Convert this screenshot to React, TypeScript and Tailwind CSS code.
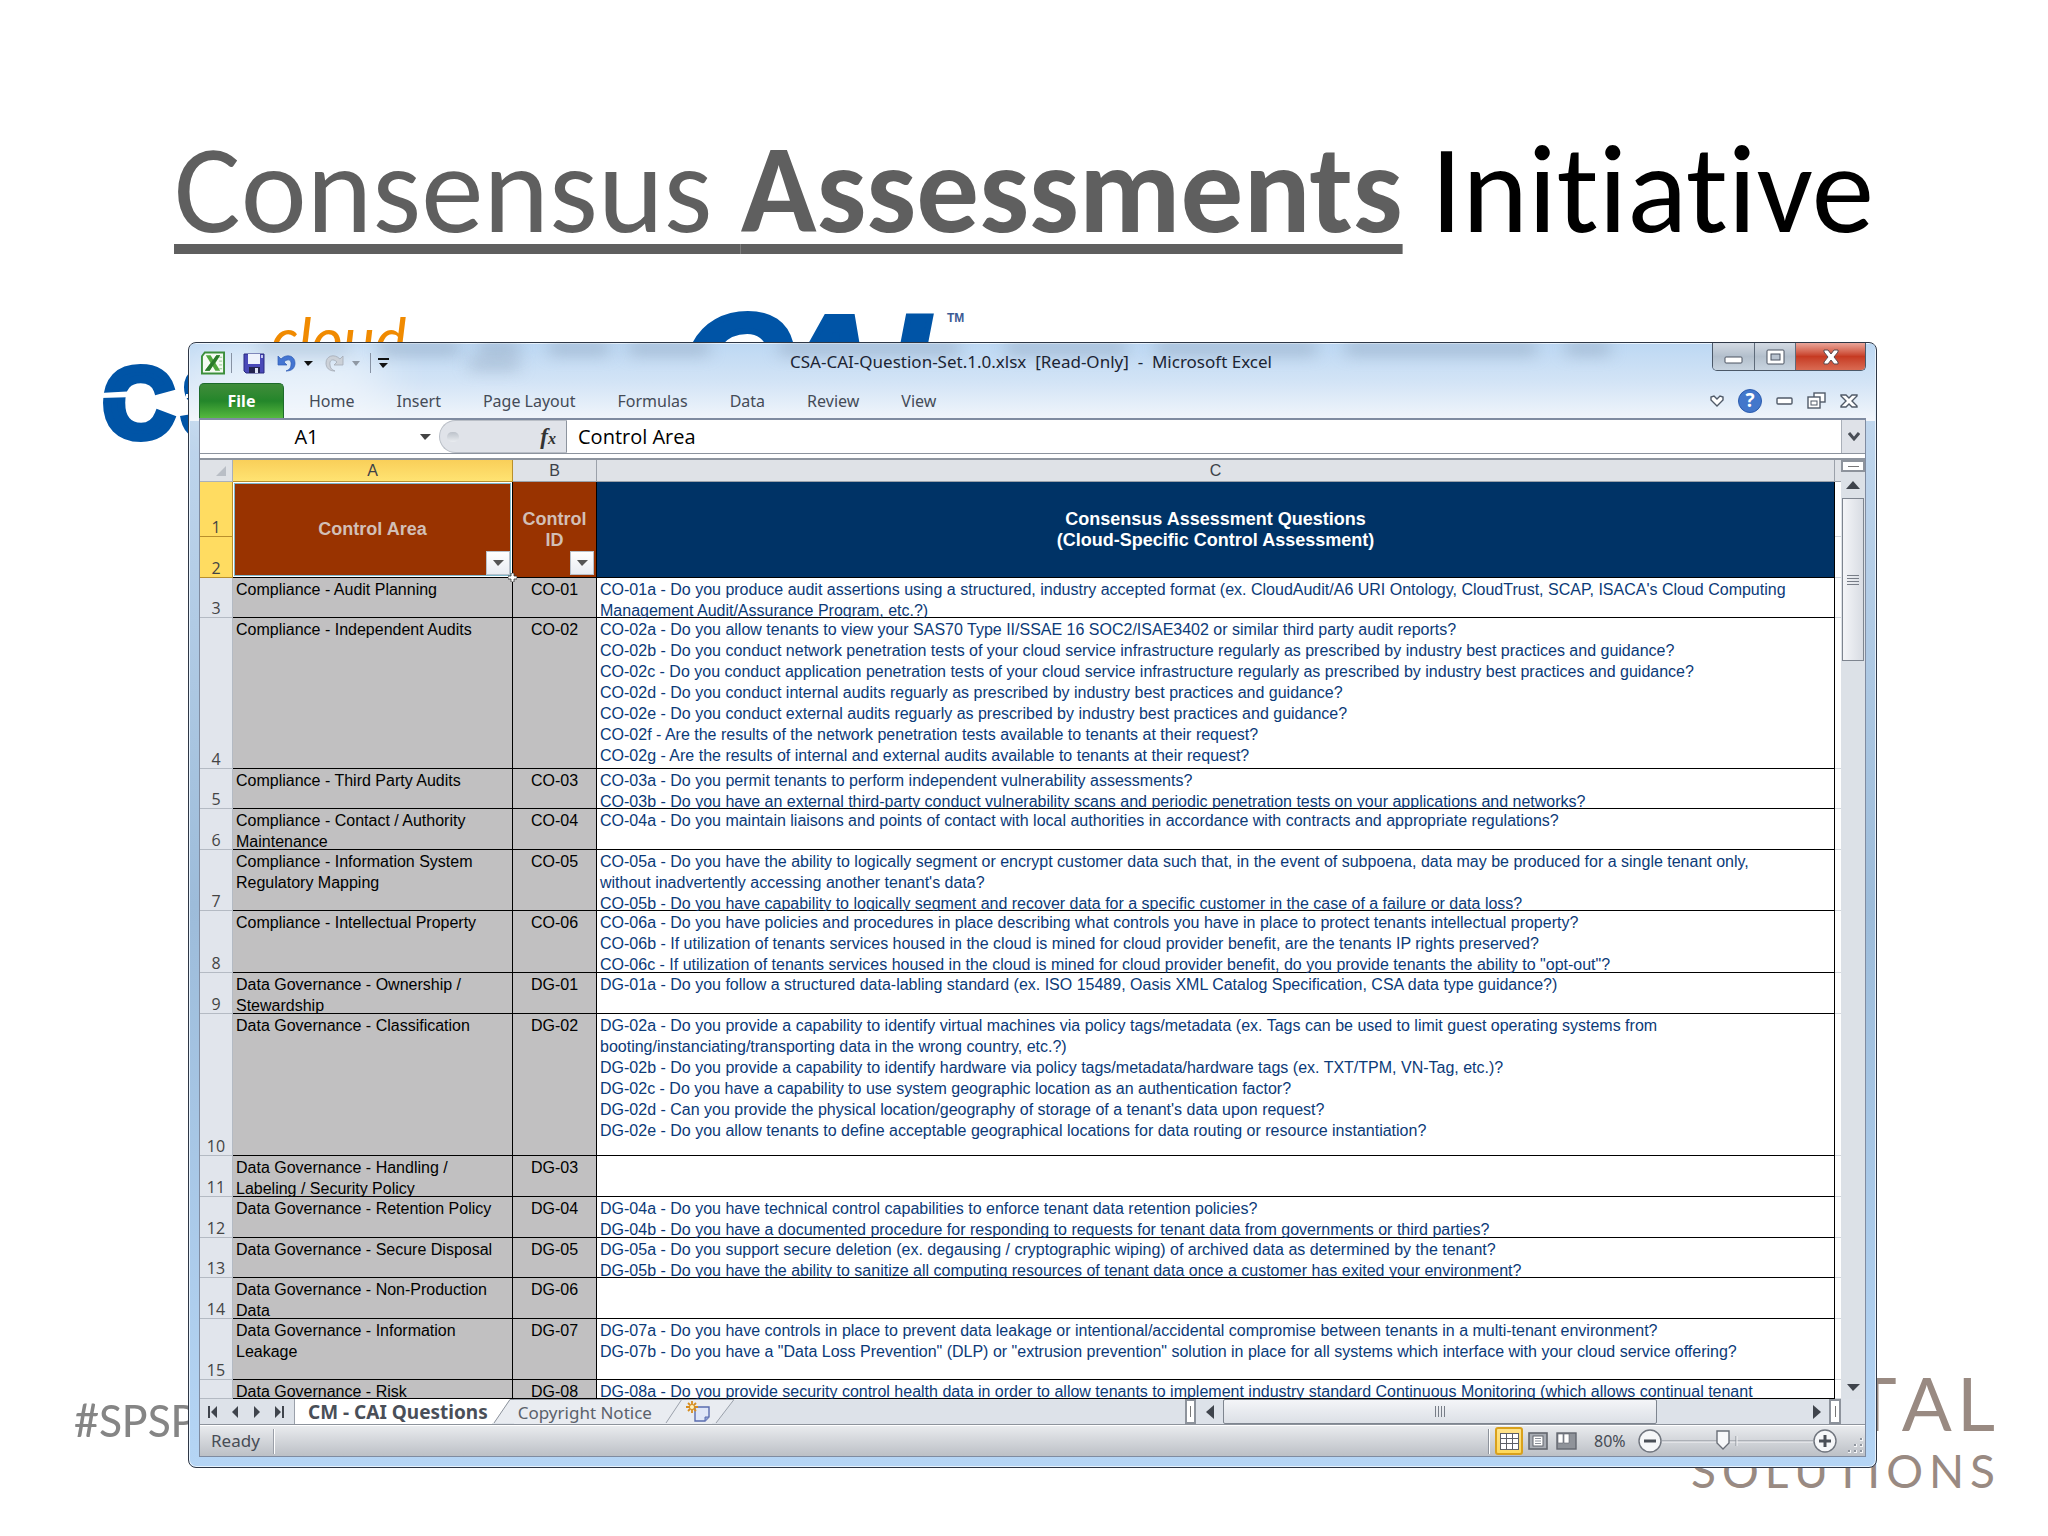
import { Fragment } from 'react'
import type { ReactNode } from 'react'

type Row = { n: number; h: string; area: string[]; id: string; q: string[] }

const ROWS: Row[] = [
  { n: 3, h: 'h-[40px]', area: ['Compliance - Audit Planning'], id: 'CO-01', q: [
    "CO-01a - Do you produce audit assertions using a structured, industry accepted format (ex. CloudAudit/A6 URI Ontology, CloudTrust, SCAP, ISACA's Cloud Computing",
    'Management Audit/Assurance Program, etc.?)',
  ] },
  { n: 4, h: 'h-[151px]', area: ['Compliance - Independent Audits'], id: 'CO-02', q: [
    'CO-02a - Do you allow tenants to view your SAS70 Type II/SSAE 16 SOC2/ISAE3402 or similar third party audit reports?',
    'CO-02b - Do you conduct network penetration tests of your cloud service infrastructure regularly as prescribed by industry best practices and guidance?',
    'CO-02c - Do you conduct application penetration tests of your cloud service infrastructure regularly as prescribed by industry best practices and guidance?',
    'CO-02d - Do you conduct internal audits reguarly as prescribed by industry best practices and guidance?',
    'CO-02e - Do you conduct external audits reguarly as prescribed by industry best practices and guidance?',
    'CO-02f - Are the results of the network penetration tests available to tenants at their request?',
    'CO-02g - Are the results of internal and external audits available to tenants at their request?',
  ] },
  { n: 5, h: 'h-[40px]', area: ['Compliance - Third Party Audits'], id: 'CO-03', q: [
    'CO-03a - Do you permit tenants to perform independent vulnerability assessments?',
    'CO-03b - Do you have an external third-party conduct vulnerability scans and periodic penetration tests on your applications and networks?',
  ] },
  { n: 6, h: 'h-[41px]', area: ['Compliance - Contact / Authority', 'Maintenance'], id: 'CO-04', q: [
    'CO-04a - Do you maintain liaisons and points of contact with local authorities in accordance with contracts and appropriate regulations?',
  ] },
  { n: 7, h: 'h-[61px]', area: ['Compliance - Information System', 'Regulatory Mapping'], id: 'CO-05', q: [
    'CO-05a - Do you have the ability to logically segment or encrypt customer data such that, in the event of subpoena, data may be produced for a single tenant only,',
    "without inadvertently accessing another tenant's data?",
    'CO-05b - Do you have capability to logically segment and recover data for a specific customer in the case of a failure or data loss?',
  ] },
  { n: 8, h: 'h-[62px]', area: ['Compliance - Intellectual Property'], id: 'CO-06', q: [
    'CO-06a - Do you have policies and procedures in place describing what controls you have in place to protect tenants intellectual property?',
    'CO-06b - If utilization of tenants services housed in the cloud is mined for cloud provider benefit, are the tenants IP rights preserved?',
    'CO-06c - If utilization of tenants services housed in the cloud is mined for cloud provider benefit, do you provide tenants the ability to "opt-out"?',
  ] },
  { n: 9, h: 'h-[41px]', area: ['Data Governance - Ownership /', 'Stewardship'], id: 'DG-01', q: [
    'DG-01a - Do you follow a structured data-labling standard (ex. ISO 15489, Oasis XML Catalog Specification, CSA data type guidance?)',
  ] },
  { n: 10, h: 'h-[142px]', area: ['Data Governance - Classification'], id: 'DG-02', q: [
    'DG-02a - Do you provide a capability to identify virtual machines via policy tags/metadata (ex. Tags can be used to limit guest operating systems from',
    'booting/instanciating/transporting data in the wrong country, etc.?)',
    'DG-02b - Do you provide a capability to identify hardware via policy tags/metadata/hardware tags (ex. TXT/TPM, VN-Tag, etc.)?',
    'DG-02c - Do you have a capability to use system geographic location as an authentication factor?',
    "DG-02d - Can you provide the physical location/geography of storage of a tenant's data upon request?",
    'DG-02e - Do you allow tenants to define acceptable geographical locations for data routing or resource instantiation?',
  ] },
  { n: 11, h: 'h-[41px]', area: ['Data Governance - Handling /', 'Labeling / Security Policy'], id: 'DG-03', q: [] },
  { n: 12, h: 'h-[41px]', area: ['Data Governance - Retention Policy'], id: 'DG-04', q: [
    'DG-04a - Do you have technical control capabilities to enforce tenant data retention policies?',
    'DG-04b - Do you have a documented procedure for responding to requests for tenant data from governments or third parties?',
  ] },
  { n: 13, h: 'h-[40px]', area: ['Data Governance - Secure Disposal'], id: 'DG-05', q: [
    'DG-05a - Do you support secure deletion (ex. degausing / cryptographic wiping) of archived data as determined by the tenant?',
    'DG-05b - Do you have the ability to sanitize all computing resources of tenant data once a customer has exited your environment?',
  ] },
  { n: 14, h: 'h-[41px]', area: ['Data Governance - Non-Production', 'Data'], id: 'DG-06', q: [] },
  { n: 15, h: 'h-[61px]', area: ['Data Governance - Information', 'Leakage'], id: 'DG-07', q: [
    'DG-07a - Do you have controls in place to prevent data leakage or intentional/accidental compromise between tenants in a multi-tenant environment?',
    'DG-07b - Do you have a "Data Loss Prevention" (DLP) or "extrusion prevention" solution in place for all systems which interface with your cloud service offering?',
  ] },
  { n: 16, h: 'h-[19px]', area: ['Data Governance - Risk'], id: 'DG-08', q: [
    'DG-08a - Do you provide security control health data in order to allow tenants to implement industry standard Continuous Monitoring (which allows continual tenant',
  ] },
]

const TABS = ['Home', 'Insert', 'Page Layout', 'Formulas', 'Data', 'Review', 'View']

function Lines({ items }: { items: string[] }) {
  return (
    <>
      {items.map((t, i) => (
        <Fragment key={i}>
          {i > 0 && <br />}
          {t}
        </Fragment>
      ))}
    </>
  )
}

function IconButton({ label, className, children }: { label: string; className?: string; children: ReactNode }) {
  return (
    <button aria-label={label} className={`flex shrink-0 items-center justify-center ${className ?? ''}`}>
      {children}
    </button>
  )
}

function Arrow({ d, w, h, fill = '#3f444c' }: { d: string; w: number; h: number; fill?: string }) {
  return <svg width={w} height={h} viewBox={`0 0 ${w} ${h}`}><path d={d} fill={fill} /></svg>
}

/* ── Logos behind the window ─────────────────────────────────── */
function Logos() {
  return (
    <>
      <svg className="absolute left-[90px] top-[300px]" width="900" height="160" viewBox="0 0 900 160">
        <g fontFamily="Liberation Sans" fontWeight="700" fill="#0054a6" stroke="#0054a6">
          <text x="13" y="137" fontSize="98" strokeWidth="8">C</text>
          <text x="92" y="137" fontSize="98" strokeWidth="8">S</text>
          <g fontSize="150" strokeWidth="6" fontStyle="italic">
            <text x="590" y="120">C</text>
            <text x="682" y="120">A</text>
            <text x="796" y="120">I</text>
          </g>
        </g>
        <path d="M10 93 L46 91 V97 L10 98 Z M96 94 H140 V98 H96 Z" fill="#fff" />
        <text x="181" y="61" fontFamily="Lato" fontSize="60" fontStyle="italic" fill="#f08a00">cloud</text>
        <text x="857" y="22" fontFamily="Liberation Sans" fontSize="12" fontWeight="700" fill="#3c5a94">TM</text>
      </svg>
      <p className="absolute bottom-[86px] left-[74px] font-[Carlito,Lato,sans-serif] text-[50px] leading-[60px] text-[#858585]">#SPSP</p>
      <div className="absolute bottom-[40px] right-[53px] w-[304px] font-[Lato,sans-serif] text-[#998a82]">
        <div className="mb-[5px] ml-auto flex w-[142px] justify-between text-[74px] leading-[76px]">
          {['T', 'A', 'L'].map((c) => <span key={c}>{c}</span>)}
        </div>
        <div className="flex justify-between text-[46px] leading-[50px]">
          {'SOLUTIONS'.split('').map((c, i) => <span key={i}>{c}</span>)}
        </div>
      </div>
    </>
  )
}

/* ── Title bar ───────────────────────────────────────────────── */
function TitleBar() {
  return (
    <header className="relative flex h-[40px] items-start">
      <div className="flex h-[40px] items-center pl-[2px]">
        <svg width="24" height="24" viewBox="0 0 25 24">
          <path d="M4 1 H24 V23 H1 V5 Z" fill="#f4faf2" stroke="#3c8f3c" strokeWidth="2" />
          <path d="M5 4 H10 L13 9 L16 4 H20 L15 12 L20 20 H15 L12 15 L9 20 H4 L10 12 Z" fill="#4fa63c" />
          <path d="M16 4 H20 L9 20 H4 Z" fill="#2a7a2a" />
          <path d="M19 6 H22 M19 10 H22 M19 14 H22 M19 18 H22" stroke="#8cc48a" strokeWidth="1" />
        </svg>
        <span className="ml-[6px] h-[20px] w-px bg-[#8792a3]" />
        <IconButton label="Save" className="ml-[11px]">
          <svg width="22" height="21" viewBox="0 0 22 21">
            <path d="M1 1 H21 V20 H3 L1 18 Z" fill="#4a49b8" stroke="#2b2b80" />
            <rect x="5" y="1" width="12" height="10" fill="#eef2fc" />
            <rect x="18" y="2" width="2" height="3" fill="#c3c8f0" />
            <rect x="6" y="14" width="11" height="6" fill="#23234f" />
            <rect x="12" y="15" width="3" height="5" fill="#dfe4f6" />
          </svg>
        </IconButton>
        <IconButton label="Undo" className="ml-[12px]">
          <svg width="20" height="20" viewBox="0 0 20 20">
            <path d="M1 3 V12 H10 L7 9 C11 5 15 7 14 12 C14 15 12 17 9 18 C15 18 18 15 18 10 C18 3 10 0 4 6 Z" fill="#4475d2" stroke="#2e5bb5" strokeWidth=".7" />
          </svg>
        </IconButton>
        <IconButton label="Undo history" className="ml-[7px]"><Arrow d="M0 0 H9 L4 5 Z" w={9} h={5} fill="#111" /></IconButton>
        <IconButton label="Redo" className="ml-[12px]">
          <svg width="20" height="20" viewBox="0 0 20 20">
            <path d="M18 3 V12 H9 L12 9 C8 5 4 7 5 12 C5 15 7 17 10 18 C4 18 1 15 1 10 C1 3 9 0 15 6 Z" fill="#ccd1d8" stroke="#a4abb5" strokeWidth=".8" />
          </svg>
        </IconButton>
        <IconButton label="Redo history" className="ml-[7px]"><Arrow d="M0 0 H8 L4 5 Z" w={8} h={5} fill="#8f98a3" /></IconButton>
        <span className="ml-[10px] h-[20px] w-px bg-[#8792a3]" />
        <IconButton label="Customize toolbar" className="ml-[7px]"><Arrow d="M0 0 H11 V2 H0 Z M1 5 H10 L5 10 Z" w={11} h={10} fill="#111" /></IconButton>
      </div>
      <p className="absolute inset-x-0 top-[7px] pr-[3px] text-center font-['Noto_Sans',sans-serif] text-[17px] leading-[24px] whitespace-pre text-[#1c2433]">
        CSA-CAI-Question-Set.1.0.xlsx  [Read-Only]  -  Microsoft Excel
      </p>
      <div className="ml-auto flex h-[28px] overflow-hidden rounded-b-[5px] border border-t-0 border-[#4b5868]">
        <IconButton label="Minimize" className="w-[42px] border-r border-[#5f6b7a] bg-linear-to-b from-[#d3dae3] via-[#b3bfcc] to-[#c8d4e0] pt-[6px]">
          <svg width="20" height="8" viewBox="0 0 20 8"><rect x="1" y="1" width="17" height="6" rx="1" fill="#fff" stroke="#4a5361" /></svg>
        </IconButton>
        <IconButton label="Restore window" className="w-[41px] border-r border-[#5f6b7a] bg-linear-to-b from-[#d3dae3] via-[#b3bfcc] to-[#c8d4e0]">
          <svg width="19" height="16" viewBox="0 0 19 16">
            <rect x="1" y="1" width="17" height="14" rx="1" fill="#fff" stroke="#4a5361" />
            <rect x="5" y="5" width="9" height="6" fill="#b9c3cf" stroke="#4a5361" />
          </svg>
        </IconButton>
        <IconButton label="Close" className="w-[69px] bg-linear-to-b from-[#e9a59a] via-[#c63a22] to-[#d96a52]">
          <svg width="18" height="16" viewBox="0 0 18 16">
            <path d="M2 1 H6 L9 5 L12 1 H16 V3 L12 8 L16 13 V15 H12 L9 11 L6 15 H2 V13 L6 8 L2 3 Z" fill="#fff" stroke="#5b4a4e" />
          </svg>
        </IconButton>
      </div>
    </header>
  )
}

function RibbonTabs() {
  return (
    <nav className="relative flex h-[35px] items-stretch font-['Noto_Sans',sans-serif] text-[16px] text-[#444b57]">
      <button className="mr-[4px] w-[85px] rounded-t-[5px] border border-b-0 border-[#1d6b2b] bg-linear-to-b from-[#3f8c3a] via-[#23862a] to-[#55b93e] font-bold text-white">File</button>
      {TABS.map((t) => <button key={t} className="px-[21px] pt-px">{t}</button>)}
      <div className="ml-auto flex items-center gap-[14px] pr-[8px]">
        <IconButton label="Expand ribbon">
          <svg width="14" height="12" viewBox="0 0 14 12"><path d="M7 11 L1 5 V2 L4 1 L7 4 L10 1 L13 2 V5 Z" fill="#fff" stroke="#505a68" strokeWidth="1.4" /></svg>
        </IconButton>
        <IconButton label="Help" className="size-[24px] rounded-full border border-[#2c5cae] bg-[#4377cb] text-[19px] leading-none font-bold text-white">?</IconButton>
        <IconButton label="Minimize workbook">
          <svg width="17" height="8" viewBox="0 0 17 8"><rect x="1" y="1" width="15" height="6" rx="1" fill="#fff" stroke="#505a68" strokeWidth="1.4" /></svg>
        </IconButton>
        <IconButton label="Restore workbook">
          <svg width="19" height="17" viewBox="0 0 19 17">
            <rect x="7" y="1" width="11" height="9" fill="#fff" stroke="#505a68" strokeWidth="1.4" />
            <rect x="1" y="5" width="12" height="11" fill="#fff" stroke="#505a68" strokeWidth="1.4" />
            <rect x="4" y="9" width="6" height="4" fill="#fff" stroke="#505a68" />
          </svg>
        </IconButton>
        <IconButton label="Close workbook">
          <svg width="18" height="14" viewBox="0 0 18 14">
            <path d="M1 1 H6 L9 4 L12 1 H17 V2 L12 7 L17 12 V13 H12 L9 10 L6 13 H1 V12 L6 7 L1 2 Z" fill="#fff" stroke="#505a68" strokeWidth="1.4" />
          </svg>
        </IconButton>
      </div>
    </nav>
  )
}

function FormulaBar() {
  return (
    <div className="flex h-[34px] border-b border-[#8d949e] bg-white font-['Open_Sans',sans-serif] text-[20px] text-black">
      <input aria-label="Name box" defaultValue="A1" className="w-[213px] bg-transparent text-center outline-none" />
      <IconButton label="Name list" className="w-[24px]"><Arrow d="M0 0 H11 L5 6 Z" w={11} h={6} fill="#444" /></IconButton>
      <div className="ml-[2px] flex w-[128px] items-center justify-between rounded-l-full border border-r-[#8d949e] border-[#b9bec6] bg-[#e0e3e9] pr-[10px] pl-[7px]">
        <span className="h-[10px] w-[12px] rounded-full bg-linear-to-b from-[#bcc2ca] to-[#e9ecf0]" />
        <button aria-label="Insert function" className="font-['Liberation_Serif',serif] text-[23px] leading-none font-bold text-[#333] italic">f<span className="text-[16px]">x</span></button>
      </div>
      <input aria-label="Formula" defaultValue="Control Area" className="min-w-0 flex-1 bg-transparent pl-[11px] outline-none" />
      <IconButton label="Expand formula bar" className="w-[24px] border-l border-[#a9afb8] bg-[#dfe2e8]">
        <svg width="12" height="10" viewBox="0 0 12 10"><path d="M1 1 L6 7 L11 1" fill="none" stroke="#4a4f57" strokeWidth="3" /></svg>
      </IconButton>
    </div>
  )
}

/* ── Sheet ───────────────────────────────────────────────────── */
function FilterButton({ label }: { label: string }) {
  return (
    <IconButton label={label} className="absolute right-[2px] bottom-[2px] size-[24px] border border-[#b8c0ca] bg-linear-to-b from-white to-[#e9ecf2]">
      <Arrow d="M0 0 H11 L5 6 Z" w={11} h={6} fill="#555" />
    </IconButton>
  )
}

function Sheet() {
  return (
    <table className="min-w-0 flex-1 table-fixed border-separate border-spacing-0 bg-white font-['Liberation_Sans',Arial,sans-serif] text-[16px] leading-[21px]">
      <colgroup>
        <col className="w-[33px]" />
        <col className="w-[280px]" />
        <col className="w-[84px]" />
        <col />
        <col className="w-[6px]" />
      </colgroup>
      <thead>
        <tr className="h-[22px] bg-[#dfe2e7] text-[#3c4148]">
          <td className="border-r border-b border-[#a9b0ba] p-0">
            <svg className="mr-[6px] ml-auto" width="10" height="10" viewBox="0 0 10 10"><path d="M10 0 V10 H0 Z" fill="#b9bec6" /></svg>
          </td>
          <th className="border-r border-b border-[#b98f2c] bg-linear-to-b from-[#f9cf59] to-[#ffe372] p-0 font-normal">A</th>
          <th className="border-r border-b border-[#9ba1aa] p-0 font-normal">B</th>
          <th className="border-r border-b border-[#9ba1aa] p-0 font-normal">C</th>
          <td className="border-b border-[#9ba1aa] p-0" />
        </tr>
      </thead>
      <tbody>
        <tr className="h-[55px]">
          <th className="border-r border-b border-[#b98f2c] bg-[#ffdc61] p-0 align-bottom font-['Open_Sans',sans-serif] leading-[18px] font-normal text-[#444]">1</th>
          <th rowSpan={2} className="relative border-r border-b border-black bg-[#993300] p-0 text-[18px] font-bold text-[#d2bfb6] shadow-[inset_0_0_0_1px_#ffffff,inset_0_0_0_2px_#7fb9cc]">
            Control Area
            <FilterButton label="Filter control area" />
            <svg className="absolute -right-[5px] -bottom-[5px] z-10" width="9" height="9" viewBox="0 0 9 9">
              <path d="M3 0 H6 V3 H9 V6 H6 V9 H3 V6 H0 V3 H3 Z" fill="#fff" stroke="#333" strokeWidth=".8" />
            </svg>
          </th>
          <th rowSpan={2} className="relative border-r border-b border-black bg-[#993300] p-0 text-[18px] font-bold text-[#d2bfb6]">
            Control<br />ID
            <FilterButton label="Filter control ID" />
          </th>
          <th rowSpan={2} className="border-r border-b border-black bg-[#003366] p-0 text-[18px] font-bold text-white">
            Consensus Assessment Questions<br />(Cloud-Specific Control Assessment)
          </th>
          <td className="border-b border-[#d3d7dc] p-0" />
        </tr>
        <tr className="h-[41px]">
          <th className="border-r border-b border-[#b98f2c] bg-[#ffdc61] p-0 align-bottom font-['Open_Sans',sans-serif] leading-[18px] font-normal text-[#444]">2</th>
          <td className="border-b border-[#d3d7dc] p-0" />
        </tr>
        {ROWS.map((r) => (
          <tr key={r.n} className={`${r.h} align-top`}>
            <th className="border-r border-b border-[#b4bac3] bg-[#e1e5ec] p-0 align-bottom font-['Open_Sans',sans-serif] leading-[18px] font-normal text-[#444]">
              {r.n < 16 && r.n}
            </th>
            <td className="border-r border-b border-black bg-[#c1c0c1] p-0 text-black">
              <div className={`${r.h} -mb-px overflow-hidden pt-px pl-[3px] whitespace-nowrap`}><Lines items={r.area} /></div>
            </td>
            <td className="border-r border-b border-black bg-[#c1c0c1] p-0 text-center text-black">
              <div className={`${r.h} -mb-px overflow-hidden pt-px`}>{r.id}</div>
            </td>
            <td className="border-r border-b border-black p-0 text-[#0b3a78]">
              <div className={`${r.h} -mb-px overflow-hidden pt-px pl-[3px] whitespace-nowrap`}><Lines items={r.q} /></div>
            </td>
            <td className="border-b border-[#d3d7dc] p-0" />
          </tr>
        ))}
      </tbody>
    </table>
  )
}

function VerticalScroll() {
  return (
    <div className="flex w-[24px] shrink-0 flex-col items-center bg-[#dce1e7]">
      <div className="flex h-[12px] w-full items-center justify-center border-2 border-[#8d939c] bg-white"><span className="h-px w-[11px] bg-[#777]" /></div>
      <IconButton label="Scroll up" className="h-[26px] w-full"><Arrow d="M7 0 L14 8 H0 Z" w={14} h={8} /></IconButton>
      <div className="flex h-[163px] w-[22px] flex-col items-center justify-center gap-[2px] border border-[#7e858f] bg-linear-to-r from-[#f4f5f8] to-[#d8dce3]">
        {[0, 1, 2, 3].map((i) => <span key={i} className="h-px w-[12px] bg-[#777d87]" />)}
      </div>
      <IconButton label="Scroll down" className="mt-auto h-[24px] w-full"><Arrow d="M0 0 H13 L6 7 Z" w={13} h={7} /></IconButton>
    </div>
  )
}

function SheetTabs() {
  return (
    <div className="flex h-[26px] items-stretch border-b border-[#8d939c] bg-[#dde2e9] font-['Noto_Sans',sans-serif] text-[17px]">
      <div className="flex w-[94px] shrink-0 items-center justify-between pr-[10px] pl-[8px]">
        <IconButton label="First sheet"><Arrow d="M0 0 H2 V12 H0 Z M9 0 V12 L3 6 Z" w={9} h={12} /></IconButton>
        <IconButton label="Previous sheet"><Arrow d="M6 0 V12 L0 6 Z" w={6} h={12} /></IconButton>
        <IconButton label="Next sheet"><Arrow d="M0 0 V12 L6 6 Z" w={6} h={12} /></IconButton>
        <IconButton label="Last sheet"><Arrow d="M0 0 V12 L6 6 Z M7 0 H9 V12 H7 Z" w={9} h={12} /></IconButton>
      </div>
      <button className="shrink-0 border-l border-[#9aa0aa] bg-white pr-[4px] pl-[13px] text-[19px] leading-[24px] font-bold text-[#4a4f58]">CM - CAI Questions</button>
      <svg className="shrink-0" width="22" height="25" viewBox="0 0 22 25"><path d="M0 0 H18 L2 24 H0 Z" fill="#fff" /><path d="M22 0 H18 L2 24 H22 Z" fill="#e9ecf1" /><path d="M22 .5 H18 L2 24" fill="none" stroke="#8d939c" /></svg>
      <button className="shrink-0 border-t border-[#9aa0aa] bg-[#e9ecf1] px-[4px] leading-[23px] text-[#5b616b]">Copyright Notice</button>
      <svg className="shrink-0" width="30" height="25" viewBox="0 0 30 25"><path d="M0 0 H30 V25 H0 Z" fill="#e9ecf1" /><path d="M0 .5 H30 M26 0 L10 24" fill="none" stroke="#9aa0aa" /></svg>
      <IconButton label="Insert sheet" className="border-t border-[#9aa0aa] bg-[#e9ecf1]">
        <svg width="26" height="22" viewBox="0 0 26 22">
          <path d="M9 6 H23 V16 L19 20 H9 Z" fill="#dfe6f8" stroke="#5a6cae" strokeWidth="1.4" />
          <path d="M23 16 H19 V20" fill="#8fa0d8" stroke="#5a6cae" />
          <path d="M6 0 V12 M0 6 H12 M2 2 L10 10 M10 2 L2 10" stroke="#d78d1f" strokeWidth="1.8" />
          <circle cx="6" cy="6" r="2" fill="#fff3c0" />
        </svg>
      </IconButton>
      <svg className="shrink-0" width="22" height="25" viewBox="0 0 22 25"><path d="M0 0 H22 L4 24 H0 Z" fill="#e9ecf1" /><path d="M0 .5 H22 L4 24" fill="none" stroke="#9aa0aa" /></svg>
      <div className="ml-auto flex w-[680px] shrink-0 items-stretch">
        <div className="flex w-[11px] items-center justify-center border-2 border-[#8d939c] bg-white"><span className="h-[11px] w-px bg-[#777]" /></div>
        <IconButton label="Scroll left" className="w-[27px]"><Arrow d="M8 0 V14 L0 7 Z" w={8} h={14} /></IconButton>
        <div className="flex w-[434px] items-center justify-center gap-[2px] rounded-[2px] border border-[#7e858f] bg-linear-to-b from-[#f4f5f8] to-[#dce0e6]">
          {[0, 1, 2, 3].map((i) => <span key={i} className="h-[11px] w-px bg-[#777d87]" />)}
        </div>
        <IconButton label="Scroll right" className="ml-auto w-[25px]"><Arrow d="M0 0 V14 L8 7 Z" w={8} h={14} /></IconButton>
        <div className="flex w-[12px] items-center justify-center border-2 border-[#8d939c] bg-white"><span className="h-[11px] w-px bg-[#777]" /></div>
        <span className="w-[24px]" />
      </div>
    </div>
  )
}

function StatusBar() {
  return (
    <footer className="flex h-[31px] items-center border-t border-white bg-linear-to-b from-[#e9ebee] to-[#bcc0c6] pl-[11px] font-['Noto_Sans',sans-serif] text-[17px] leading-[26px] text-[#474c55]">
      Ready
      <span className="ml-[13px] h-[25px] w-[2px] border-r border-white bg-[#9a9fa8]" />
      <div className="ml-auto flex items-center">
        <span className="h-[25px] w-[2px] border-r border-white bg-[#8d939c]" />
        <IconButton label="Normal view" className="ml-[5px] h-[28px] w-[28px] rounded-[3px] border-2 border-[#d9a11d] bg-linear-to-b from-[#ffe38a] to-[#ffd95a]">
          <svg width="19" height="17" viewBox="0 0 19 17"><rect width="19" height="17" fill="#5d6066" /><path d="M1 1h5v4h-5z M7 1h5v4h-5z M13 1h5v4h-5z M1 6h5v4h-5z M7 6h5v4h-5z M13 6h5v4h-5z M1 11h5v5h-5z M7 11h5v5h-5z M13 11h5v5h-5z" fill="#fff" /></svg>
        </IconButton>
        <IconButton label="Page layout view" className="ml-[5px]">
          <svg width="20" height="18" viewBox="0 0 20 18"><rect x="1" y="1" width="18" height="16" fill="#a9adb4" stroke="#63676f" strokeWidth="1.6" /><rect x="5" y="4" width="10" height="10" fill="#fff" stroke="#63676f" /><path d="M7 6.500H13 M7 9H13 M7 11.500H13" stroke="#8a8f98" /></svg>
        </IconButton>
        <IconButton label="Page break view" className="ml-[8px]">
          <svg width="21" height="18" viewBox="0 0 21 18"><rect x="1" y="1" width="19" height="16" fill="#8f939a" stroke="#63676f" strokeWidth="1.4" /><path d="M2 2 H7 V11 H2 Z M8 2 H13 V11 H8 Z" fill="#fff" stroke="#63676f" strokeWidth=".6" /></svg>
        </IconButton>
        <span className="ml-[17px] w-[36px] text-[16px]">80%</span>
        <IconButton label="Zoom out" className="ml-[8px]">
          <svg width="24" height="24" viewBox="0 0 24 24"><circle cx="12" cy="12" r="11" fill="#f6f7f9" stroke="#70757e" strokeWidth="1.4" /><path d="M6 12 H18" stroke="#4a4f57" strokeWidth="3" /></svg>
        </IconButton>
        <div className="relative h-[24px] w-[151px]">
          <svg width="151" height="24" viewBox="0 0 151 24">
            <path d="M0 12 H151" stroke="#878c95" /><path d="M0 13 H151" stroke="#f3f4f6" />
            <path d="M74 7 V17" stroke="#878c95" /><path d="M75 7 V17" stroke="#f3f4f6" />
            <path d="M55 2 H67 V14 L61 20 L55 14 Z" fill="#f7f8fa" stroke="#6a6f78" strokeWidth="1.4" />
          </svg>
          <input type="range" aria-label="Zoom" min="10" max="400" defaultValue="80" className="absolute inset-0 w-full opacity-0" />
        </div>
        <IconButton label="Zoom in">
          <svg width="24" height="24" viewBox="0 0 24 24"><circle cx="12" cy="12" r="11" fill="#f6f7f9" stroke="#70757e" strokeWidth="1.4" /><path d="M6 12 H18 M12 6 V18" stroke="#4a4f57" strokeWidth="3" /></svg>
        </IconButton>
        <svg className="ml-[11px] self-end" width="17" height="20" viewBox="0 0 17 20">
          <path d="M12 3h3v3h-3z M6 9h3v3h-3z M12 9h3v3h-3z M0 15h3v3h-3z M6 15h3v3h-3z M12 15h3v3h-3z" fill="#f4f5f7" />
          <path d="M12 3h2v2h-2z M6 9h2v2h-2z M12 9h2v2h-2z M0 15h2v2h-2z M6 15h2v2h-2z M12 15h2v2h-2z" fill="#8f959e" />
        </svg>
      </div>
    </footer>
  )
}

export default function App() {
  return (
    <main className="relative min-h-screen overflow-hidden bg-white pb-[68px]">
      <h1 className="pt-[115px] pb-[77px] text-center font-[Carlito,Lato,sans-serif] text-[125px] leading-[150px] text-black [font-variant-ligatures:none]">
        <span className="text-[#5f5f5f] underline decoration-[10px] underline-offset-[12px] [text-decoration-skip-ink:none]">Consensus <b>Assessments</b></span> Initiative
      </h1>
      <Logos />
      <section className="relative mr-[171px] ml-[188px] overflow-hidden rounded-[8px] border border-[#2e3746] bg-linear-to-b from-[#c5daf0] via-[#9dbcda] to-[#b5d5f5] px-[10px] pb-[10px] shadow-[inset_0_0_0_1px_#e8f3fd]">
        <div className="absolute inset-x-px top-px h-[77px] bg-linear-to-b from-[#bdd8f3] via-[#d3e4f6] to-[#f2f6fb]" />
        {/* glass reflections */}
        <div className="absolute top-0 left-0 h-[76px] w-[200px] rounded-full bg-white/50 blur-xl" />
        <div className="absolute top-px left-[70px] h-[9px] w-[90px] bg-[#8fa3ba]/50 blur-sm" />
        <div className="absolute top-px left-[190px] h-[9px] w-[80px] bg-[#8fa3ba]/80 blur-sm" />
        <div className="absolute top-[16px] left-[280px] h-[10px] w-[50px] bg-[#8fa3ba]/60 blur-sm" />
        <div className="absolute top-px left-[290px] h-[9px] w-[40px] bg-[#8fa3ba]/80 blur-sm" />
        <div className="absolute top-px left-[360px] h-[9px] w-[60px] bg-[#8fa3ba]/80 blur-sm" />
        <div className="absolute top-px left-[440px] h-[9px] w-[80px] bg-[#8fa3ba]/80 blur-sm" />
        <div className="absolute top-px left-[590px] h-[9px] w-[180px] bg-[#8fa3ba]/80 blur-sm" />
        <div className="absolute top-px right-[750px] h-[9px] w-[120px] bg-[#8fa3ba]/80 blur-sm" />
        <div className="absolute top-px right-[560px] h-[9px] w-[160px] bg-[#8fa3ba]/80 blur-sm" />
        <div className="absolute top-px right-[340px] h-[9px] w-[190px] bg-[#8fa3ba]/80 blur-sm" />
        <div className="absolute top-px right-[266px] h-[9px] w-[44px] bg-[#8fa3ba]/80 blur-sm" />
        <TitleBar />
        <RibbonTabs />
        <div className="relative border-t-2 border-r border-b border-l border-[#7f8ba0] bg-white">
          <FormulaBar />
          <div className="mt-[4px] flex border-t-2 border-[#8d949e]">
            <Sheet />
            <VerticalScroll />
          </div>
          <SheetTabs />
          <StatusBar />
        </div>
      </section>
    </main>
  )
}
